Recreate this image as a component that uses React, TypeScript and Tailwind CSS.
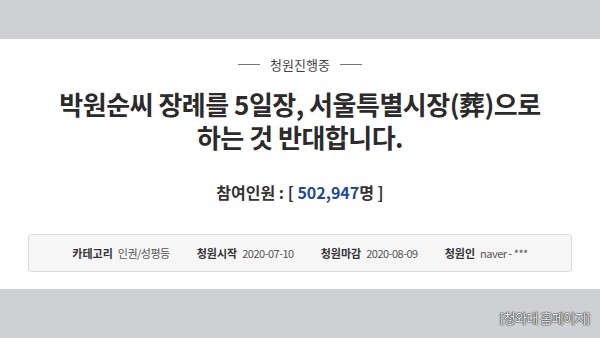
import React from 'react';

const font = { fontFamily: '"Noto Sans CJK KR", "Noto Sans", sans-serif' };

const InfoItem = ({ label, value }: { label: string; value: string }) => (
  <div className="flex items-center gap-[5px]">
    <span className="font-bold text-[#333]">{label}</span>
    <span className="text-[#555] tracking-[-0.5px]">{value}</span>
  </div>
);

const App = () => {
  return (
    <div className="w-[600px] h-[338px] overflow-hidden bg-[#cfd0d4] flex flex-col" style={font}>
      <div className="h-[39px] shrink-0" />
      <div className="h-[250px] shrink-0 bg-white flex flex-col items-center">
        <div className="mt-[19px] flex items-center gap-[10px] text-[13px] text-[#444] leading-none">
          <span className="w-[22px] h-px bg-[#777]" />
          <span>청원진행중</span>
          <span className="w-[22px] h-px bg-[#777]" />
        </div>
        <h1 className="mt-[16px] text-[26px] font-bold text-[#2b2b2b] text-center leading-[33px] tracking-[-0.5px]">
          박원순씨 장례를 5일장, 서울특별시장(葬)으로
          <br />
          하는 것 반대합니다.
        </h1>
        <div className="mt-[31px] text-[16px] font-bold text-[#333] leading-none">
          참여인원 : [ <span className="text-[#1d4b94]">502,947</span>명 ]
        </div>
        <div className="mt-[34px] w-[544px] h-[38px] bg-[#f6f6f6] border border-[#dcdcdc] rounded-[3px] flex items-center justify-center gap-[27px] text-[11px]">
          <InfoItem label="카테고리" value="인권/성평등" />
          <InfoItem label="청원시작" value="2020-07-10" />
          <InfoItem label="청원마감" value="2020-08-09" />
          <InfoItem label="청원인" value="naver - ***" />
        </div>
      </div>
      <div className="flex-1 flex items-end justify-end pr-[10px] pb-[11px]">
        <span
          className="text-[13px] text-[#ededed] tracking-[-0.5px]"
          style={{ textShadow: '0 0 1px #333, 0 0 1px #333, 0 0 2px #444' }}
        >
          [청와대 홈페이지]
        </span>
      </div>
    </div>
  );
};

export default App;
